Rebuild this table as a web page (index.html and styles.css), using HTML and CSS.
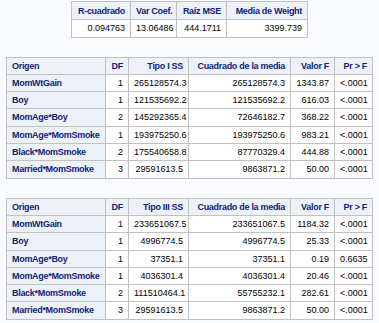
FILE: index.html
```html
<!DOCTYPE html>
<html lang="es">
<head>
    <meta charset="UTF-8">
    <title>Resultados</title>
    <link rel="stylesheet" href="styles.css">
</head>
<body>
<table class="fit-table">
    <colgroup>
        <col class="c-rsq"><col class="c-cv"><col class="c-rmse"><col class="c-mean">
    </colgroup>
    <thead>
        <tr>
            <th>R-cuadrado</th>
            <th>Var Coef.</th>
            <th>Raíz MSE</th>
            <th>Media de Weight</th>
        </tr>
    </thead>
    <tbody>
        <tr>
            <td>0.094763</td>
            <td>13.06486</td>
            <td>444.1711</td>
            <td>3399.739</td>
        </tr>
    </tbody>
</table>

<table class="anova-table">
    <colgroup>
        <col class="c-src"><col class="c-df"><col class="c-ss"><col class="c-ms"><col class="c-f"><col class="c-p">
    </colgroup>
    <thead>
        <tr>
            <th class="left">Origen</th>
            <th>DF</th>
            <th>Tipo I SS</th>
            <th>Cuadrado de la media</th>
            <th>Valor F</th>
            <th>Pr &gt; F</th>
        </tr>
    </thead>
    <tbody id="typeOne"></tbody>
</table>

<table class="anova-table">
    <colgroup>
        <col class="c-src"><col class="c-df"><col class="c-ss"><col class="c-ms"><col class="c-f"><col class="c-p">
    </colgroup>
    <thead>
        <tr>
            <th class="left">Origen</th>
            <th>DF</th>
            <th>Tipo III SS</th>
            <th>Cuadrado de la media</th>
            <th>Valor F</th>
            <th>Pr &gt; F</th>
        </tr>
    </thead>
    <tbody id="typeThree"></tbody>
</table>

<script>
    // Origen, DF, SS, cuadrado medio, F, p
    const typeOne = [
        ["MomWtGain", 1, "265128574.3", "265128574.3", "1343.87", "<.0001"],
        ["Boy", 1, "121535692.2", "121535692.2", "616.03", "<.0001"],
        ["MomAge*Boy", 2, "145292365.4", "72646182.7", "368.22", "<.0001"],
        ["MomAge*MomSmoke", 1, "193975250.6", "193975250.6", "983.21", "<.0001"],
        ["Black*MomSmoke", 2, "175540658.8", "87770329.4", "444.88", "<.0001"],
        ["Married*MomSmoke", 3, "29591613.5", "9863871.2", "50.00", "<.0001"]
    ];
    const typeThree = [
        ["MomWtGain", 1, "233651067.5", "233651067.5", "1184.32", "<.0001"],
        ["Boy", 1, "4996774.5", "4996774.5", "25.33", "<.0001"],
        ["MomAge*Boy", 1, "37351.1", "37351.1", "0.19", "0.6635"],
        ["MomAge*MomSmoke", 1, "4036301.4", "4036301.4", "20.46", "<.0001"],
        ["Black*MomSmoke", 2, "111510464.1", "55755232.1", "282.61", "<.0001"],
        ["Married*MomSmoke", 3, "29591613.5", "9863871.2", "50.00", "<.0001"]
    ];

    function fillTable(id, rows){
        let tbody = document.getElementById(id);
        rows.forEach(function(row){
            let tr = tbody.insertRow();
            let th = document.createElement("th");
            th.className = "row-head";
            th.textContent = row[0];
            tr.appendChild(th);
            for (let i = 1; i < row.length; i++) {
                let td = tr.insertCell();
                td.textContent = row[i];
                if (i === row.length - 1) {
                    td.className = "left";
                }
            }
        });
    }

    fillTable("typeOne", typeOne);
    fillTable("typeThree", typeThree);
</script>
</body>
</html>
```

FILE: styles.css
```css
body{
    margin: 0;
    padding: 1px 0 0 0;
    background-color: #fafbfe;
    font-family: "Liberation Sans", Arial, sans-serif;
    font-size: 9px;
    color: #000;
}
table{
    border-collapse: collapse;
    border: 1px solid #c1c1c1;
    margin: 0 auto 19px auto;
    table-layout: fixed;
}
th, td{
    border: 1px solid #c1c1c1;
    padding: 3px 5px;
    line-height: 10.3px;
    text-align: right;
    white-space: nowrap;
    overflow: hidden;
}
th{
    background-color: #edf2f9;
    color: #112277;
    font-weight: bold;
    letter-spacing: -0.3px;
}
td{
    background-color: #fff;
}
.left{
    text-align: left;
}
.row-head{
    text-align: left;
}
.fit-table{
    width: 237px;
}
.fit-table thead th{
    padding-top: 4px;
    padding-bottom: 3px;
}
.c-rsq{ width: 59px; }
.c-cv{ width: 46px; }
.c-rmse{ width: 50px; }
.c-mean{ width: 81px; }
.anova-table{
    width: 367px;
}
.c-src{ width: 99px; }
.c-df{ width: 23px; }
.c-ss{ width: 60px; }
.c-ms{ width: 102px; }
.c-f{ width: 44px; }
.c-p{ width: 38px; }
```
